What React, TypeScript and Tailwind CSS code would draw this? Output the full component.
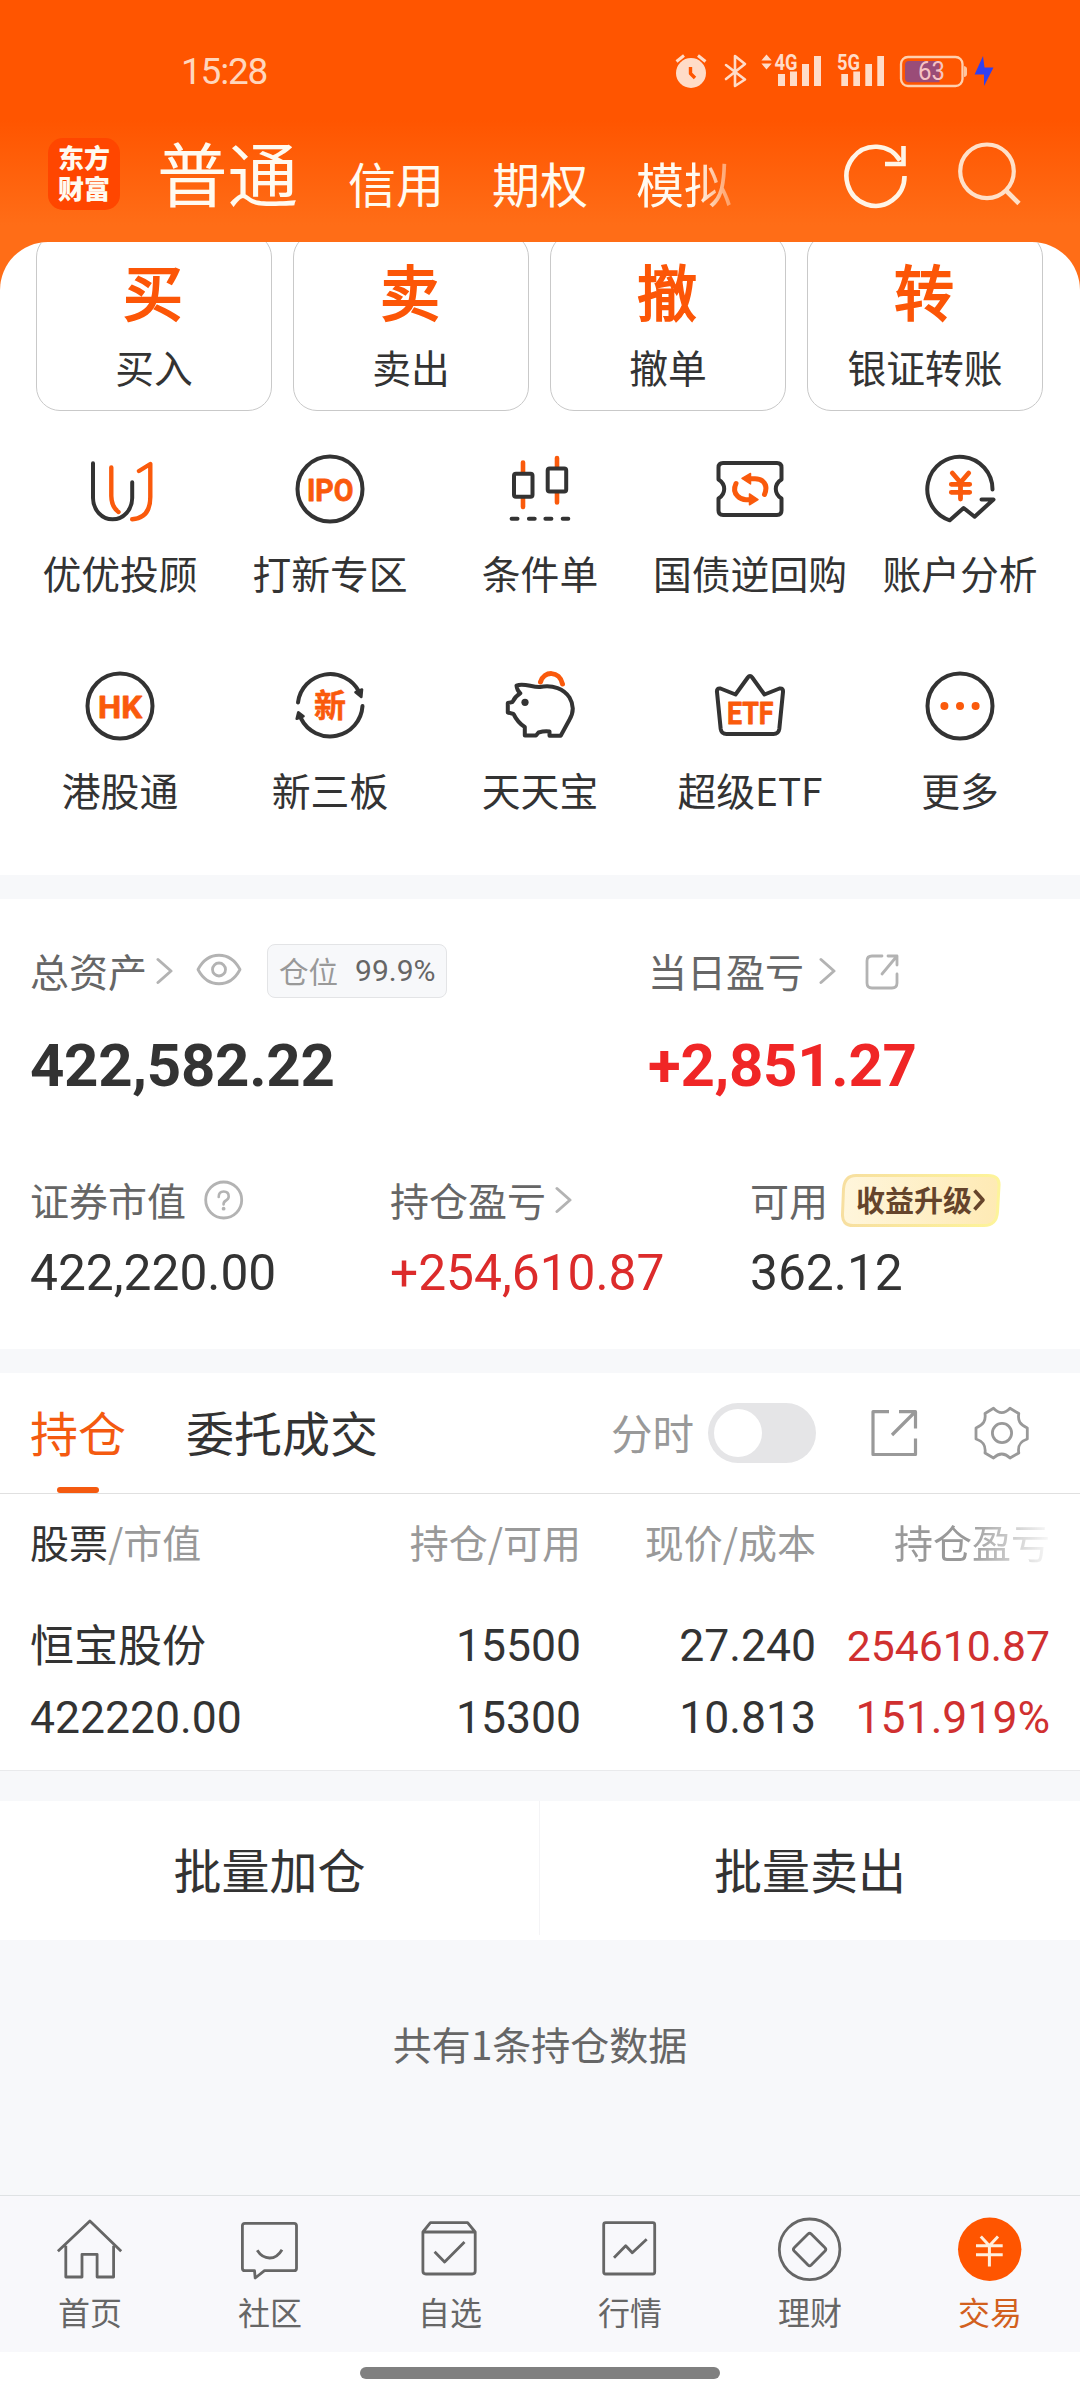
import type { ReactNode } from "react";

const DARK = "#333333";
const ORANGE = "#fa5a0c";

type BoxProps = { x: number; y: number; w: number; h: number; className?: string; children: ReactNode };

/** An icon whose shapes are given in screen coordinates, starting at (x, y). */
function Icon({ x, y, w, h, className = "", children }: BoxProps) {
  return (
    <svg
      width={w}
      height={h}
      viewBox={`${x} ${y} ${w} ${h}`}
      fill="none"
      strokeLinecap="round"
      strokeLinejoin="round"
      className={`block shrink-0 ${className}`}
    >
      {children}
    </svg>
  );
}

function StatusBar() {
  const c = "#ffdcc8";
  return (
    <div className="flex h-[132px] items-center pt-[10px] pl-[181px]">
      <div className="w-[493px] pt-[1px] font-['Roboto'] text-[37px] leading-[40px] tracking-[-1.2px] text-[#ffd6bd]">15:28</div>
      <Icon x={674} y={51} w={34} h={40}>
        <circle cx="691" cy="73" r="15" fill={c} />
        <path d="M676.5 61.5L684 55.500M705.500 61.500L698 55.500" stroke={c} strokeWidth="3" strokeLinecap="butt" />
        <path d="M690.500 67V73.500L695 78" stroke="#ff5500" strokeWidth="3.4" strokeLinecap="butt" />
      </Icon>
      <Icon x={708} y={51} w={52} h={40}>
        <path d="M726 65L745 79.500L735 86V56L745 64L726 79" stroke={c} strokeWidth="2.6" />
      </Icon>
      <Icon x={760} y={51} w={76} h={40}>
        <path d="M766.500 54.500L771.700 60.500H761.400ZM766.500 69.500L771.700 63.500H761.400Z" fill={c} />
        <text x="774.5" y="70" fill={c} fontFamily="Roboto" fontWeight="700" fontSize="21.500" textLength="23" lengthAdjust="spacingAndGlyphs">4G</text>
        <path d="M778 74h7v12h-7zM790 71.500h7v14.500h-7zM802 64h7v22h-7zM814 56h7v30h-7z" fill={c} />
      </Icon>
      <Icon x={836} y={51} w={62} h={40}>
        <text x="837" y="70" fill={c} fontFamily="Roboto" fontWeight="700" fontSize="21.500" textLength="23" lengthAdjust="spacingAndGlyphs">5G</text>
        <path d="M841.300 74h6.700v12h-6.700zM853.300 71.500h6.700v14.500h-6.700zM865.300 64h6.700v22h-6.700zM877.300 56h6.700v30h-6.700z" fill={c} />
      </Icon>
      <Icon x={898} y={51} w={98} h={40}>
        <rect x="901" y="57" width="61.500" height="29" rx="7" stroke="#ffd0ae" strokeWidth="2.3" />
        <path d="M909 61H939.500V82.300H909Q905 82.300 905 78V65Q905 61 909 61Z" fill="#9a4c78" />
        <text x="918" y="80.300" fill="#f6c3c4" fontFamily="Roboto" fontSize="25.500" textLength="27" lengthAdjust="spacingAndGlyphs">63</text>
        <path d="M964 66Q967 66.500 967 69V74Q967 76.500 964 77Z" fill="#ffc49c" />
        <path d="M983 56L974.600 74.500H984V86L993.500 67.500H984.500Z" fill="#3040f0" />
      </Icon>
    </div>
  );
}

function NavBar() {
  return (
    <div className="flex h-[110px] pl-[48px] pr-[57px] font-['Noto_Sans_CJK_SC',sans-serif] text-[#fffaf0]">
      <div className="mt-[6px] h-[72px] w-[72px] rounded-[15px] bg-[#ff4600] px-[10px] pt-[4px] text-[26px] leading-[30.500px] font-black break-all">
        东方财富
      </div>
      <div className="mt-[4px] ml-[37px] w-[191px] text-[70.500px] leading-[70px]">普通</div>
      <div className="mt-[26px] flex gap-[48px] text-[48px] leading-[48px]">
        <span>信用</span>
        <span>期权</span>
        <span className="[mask-image:linear-gradient(to_right,black_60px,transparent_115px)]">模拟</span>
      </div>
      <Icon x={841} y={140} w={70} h={70} className="mt-[8px] ml-auto">
        <path d="M904.500 176A29 29.500 0 1 1 900 160.500" stroke="#fff4e6" strokeWidth="4.600" strokeLinecap="butt" />
        <path d="M903.500 146V164H885" stroke="#fff4e6" strokeWidth="4.600" strokeLinecap="butt" strokeLinejoin="miter" />
      </Icon>
      <Icon x={953} y={140} w={70} h={70} className="mt-[8px] ml-[42px]">
        <circle cx="987" cy="171.300" r="26.800" stroke="#ffe0c8" strokeWidth="4.200" />
        <path d="M1005.500 190L1019 203.500" stroke="#ffe0c8" strokeWidth="4.600" strokeLinecap="butt" />
      </Icon>
    </div>
  );
}

function IconText({ x, y, w, size = 32, children }: { x: number; y: number; w: number; size?: number; children: string }) {
  return (
    <text
      x={x}
      y={y}
      fill={ORANGE}
      stroke={ORANGE}
      strokeWidth="0.8"
      fontFamily="Roboto"
      fontWeight="700"
      fontSize={size}
      textLength={w}
      lengthAdjust="spacingAndGlyphs"
    >
      {children}
    </text>
  );
}

const features: { label: string; x: number; y: number; icon: ReactNode }[] = [
  {
    label: "优优投顾",
    x: 78,
    y: 447,
    icon: (
      <>
        <path d="M93 463.300V498A19.600 21.300 0 0 0 132.200 498V482.300" stroke={DARK} strokeWidth="4" />
        <path d="M111.300 467.500V496Q111.500 507 118.500 512" stroke={ORANGE} strokeWidth="4.400" />
        <path d="M139 471L150.300 464V497Q150.300 518 132.200 519.300" stroke={ORANGE} strokeWidth="4.400" />
      </>
    ),
  },
  {
    label: "打新专区",
    x: 288,
    y: 447,
    icon: (
      <>
        <circle cx="330" cy="489" r="32.500" stroke={DARK} strokeWidth="4" />
        <IconText x={307} y={500.500} w={46.500}>IPO</IconText>
      </>
    ),
  },
  {
    label: "条件单",
    x: 498,
    y: 447,
    icon: (
      <>
        <path d="M523 462.500V507M557 458V502.500" stroke={ORANGE} strokeWidth="4.600" />
        <rect x="514" y="473.800" width="18.500" height="23" rx="2" stroke={DARK} strokeWidth="4" fill="#fff" />
        <rect x="547.700" y="468.500" width="18.500" height="23" rx="2" stroke={DARK} strokeWidth="4" fill="#fff" />
        <path d="M511.600 518.700H517.500M528.900 518.700H534.700M545.400 518.700H551.400M562.700 518.700H568.300" stroke={DARK} strokeWidth="4" />
      </>
    ),
  },
  {
    label: "国债逆回购",
    x: 708,
    y: 447,
    icon: (
      <>
        <path
          d="M723 463H777Q781.500 463 781.500 467.500V479.500Q775.800 483 775.800 489T781.500 498.500V510.500Q781.500 515 777 515H723Q718.500 515 718.500 510.500V498.500Q724.200 495 724.200 489T718.500 479.500V467.500Q718.500 463 723 463Z"
          stroke={DARK}
          strokeWidth="4"
        />
        <path d="M764.500 494.500Q768 486 763 481.500Q760 478.700 755 478.700H748" stroke={ORANGE} strokeWidth="5" />
        <path d="M736 483.500Q732.500 491 737.500 496Q741 499.700 746 499.700H752" stroke={ORANGE} strokeWidth="5" />
        <path d="M742 478.300L750.500 473.500V484ZM758 499.600L749.500 494V504.800Z" fill={ORANGE} stroke={ORANGE} strokeWidth="1.500" />
      </>
    ),
  },
  {
    label: "账户分析",
    x: 918,
    y: 447,
    icon: (
      <>
        <path
          d="M992.500 489.500A32.600 32.600 0 1 0 949.800 520.300L963.600 508L974.600 516.700L993.500 499.500H981.500"
          stroke={DARK}
          strokeWidth="4"
        />
        <path d="M952.300 473L960.500 482.500L968.700 473M960.500 482.500V499M951.300 484.300H969.700M951.300 492.300H969.700" stroke={ORANGE} strokeWidth="4.800" />
      </>
    ),
  },
  {
    label: "港股通",
    x: 78,
    y: 664,
    icon: (
      <>
        <circle cx="120" cy="706" r="32.500" stroke={DARK} strokeWidth="4" />
        <IconText x={98} y={717.500} w={44}>HK</IconText>
      </>
    ),
  },
  {
    label: "新三板",
    x: 288,
    y: 664,
    icon: (
      <>
        <path d="M298 702.500A32.500 32.500 0 0 1 359 691.500M362.500 706A32.500 32.500 0 0 1 301 718.500" stroke={DARK} strokeWidth="4" />
        <path d="M361.300 697L355.500 692.300L362 689.500ZM298.300 712.300L296.700 718.800L303.500 716.300Z" fill={DARK} stroke={DARK} strokeWidth="2.600" />
        <text x="314" y="717" fill={ORANGE} stroke={ORANGE} strokeWidth="0.5" fontFamily="Noto Sans CJK SC" fontWeight="700" fontSize="32">新</text>
      </>
    ),
  },
  {
    label: "天天宝",
    x: 498,
    y: 664,
    icon: (
      <>
        <path d="M540.500 682C544 670.500 559.500 670.500 562.500 684" stroke={ORANGE} strokeWidth="5" />
        <path
          d="M516.500 685.500C524 682.500 532 687.500 540 687C553 684.500 564 689 569.500 697.500C574 705 573.500 713 569.300 720L560.700 735.800H549.500V731.500Q545 730.500 538.500 732.500L536 735.500H524.800V727Q518 723 513.500 714L507.800 712.500V703L512.500 702Q515 696.500 520.300 693.300Q517 690.500 516.500 685.500Z"
          stroke={DARK}
          strokeWidth="4"
        />
        <circle cx="525" cy="702.300" r="3.600" fill={DARK} />
      </>
    ),
  },
  {
    label: "超级ETF",
    x: 708,
    y: 664,
    icon: (
      <>
        <path
          d="M720.500 688.500L735.500 694.500L747.800 677.500Q750 674.500 752.200 677.500L764.500 694.500L779.500 688.500Q783.500 688 783 692L779.300 729Q778.500 734 773.500 734H726.500Q721.500 734 720.700 729L717 692Q716.500 688 720.500 688.500Z"
          stroke={DARK}
          strokeWidth="4"
        />
        <IconText x={727} y={723.500} w={46.500}>ETF</IconText>
      </>
    ),
  },
  {
    label: "更多",
    x: 918,
    y: 664,
    icon: (
      <>
        <circle cx="960" cy="706" r="32.500" stroke={DARK} strokeWidth="4" />
        <path d="M944.400 706h.01M960 706h.01M975.600 706h.01" stroke={ORANGE} strokeWidth="8" />
      </>
    ),
  },
];

const actions = [
  ["买", "买入"],
  ["卖", "卖出"],
  ["撤", "撤单"],
  ["转", "银证转账"],
];

function Shortcuts() {
  return (
    <div className="bg-[#ff6d17]">
      <div className="h-[633px] overflow-hidden rounded-t-[48px] bg-white font-['Noto_Sans_CJK_SC',sans-serif] text-[38.800px] leading-[40px] text-[#333]">
        <div className="-mt-[9px] grid grid-cols-4 gap-[21px] pr-[37px] pl-[36px]">
          {actions.map(([mark, label]) => (
            <div key={label} className="flex h-[178px] flex-col items-center rounded-[24px] border border-[#c9c9c9] pt-[26px]">
              <div className="-ml-[2px] text-[60px] leading-[60px] text-[#fc5607] [-webkit-text-stroke:2px_#fc5607]">{mark}</div>
              <div className="mt-[26px]">{label}</div>
            </div>
          ))}
        </div>
        <div className="grid grid-cols-5 px-[15px] pt-[36px]">
          {features.map((f) => (
            <div key={f.label} className="flex h-[217px] flex-col items-center whitespace-nowrap">
              <Icon x={f.x} y={f.y} w={84} h={84}>{f.icon}</Icon>
              <div className="mt-[21px]">{f.label}</div>
            </div>
          ))}
        </div>
      </div>
    </div>
  );
}

function Chevron({ className = "" }: { className?: string }) {
  return (
    <svg width="18" height="28" viewBox="0 0 18 28" fill="none" className={`block shrink-0 ${className}`}>
      <path d="M2 2.500L15 14L2 25.500" stroke="#b3b3b3" strokeWidth="3" strokeLinecap="round" strokeLinejoin="round" />
    </svg>
  );
}

function Assets() {
  return (
    <div className="h-[450px] bg-white pt-[45px] font-['Noto_Sans_CJK_SC',sans-serif] text-[39px] leading-[50px] text-[#666]">
      <div className="flex pl-[30px]">
        <div className="w-[618px]">
          <div className="flex h-[54px] items-center">
            <span className="-mt-[3px]">总资产</span>
            <Chevron className="ml-[9px]" />
            <Icon x={194} y={950} w={50} h={40} className="ml-[20px] -mt-[3px]">
              <path d="M198 969.500C208 950.500 230 950.500 240 969.500C230 988.500 208 988.500 198 969.500Z" stroke="#b3b3b3" strokeWidth="2.800" />
              <circle cx="219" cy="969.500" r="6.500" stroke="#b3b3b3" strokeWidth="2.800" />
            </Icon>
            <div className="ml-[23px] flex h-[54px] w-[180px] items-center rounded-[8px] border border-[#e3e4e6] bg-[#f7f8fa] pl-[11px]">
              <span className="-mt-[3px] text-[29.500px] text-[#999]">仓位</span>
              <span className="ml-[17px] font-['Roboto'] text-[30px]">99.9%</span>
            </div>
          </div>
          <div className="mt-[38px] font-['Roboto'] text-[60px] leading-[60px] font-bold tracking-[-0.3px] text-[#333]">422,582.22</div>
        </div>
        <div>
          <div className="flex h-[54px] items-center">
            <span className="-mt-[3px]">当日盈亏</span>
            <Chevron className="ml-[15px]" />
            <Icon x={862} y={950} w={40} h={40} className="ml-[25px]">
              <path d="M882 955H872Q867 955 867 960V982Q867 987 872 987H892Q897 987 897 982V973M888 955H897V964M897 955L882 973" stroke="#b3b3b3" strokeWidth="2.800" />
            </Icon>
          </div>
          <div className="mt-[38px] font-['Roboto'] text-[60px] leading-[60px] font-bold tracking-[-0.3px] text-[#f02626]">+2,851.27</div>
        </div>
      </div>
      <div className="mt-[78px] flex pl-[30px]">
        <div className="w-[360px]">
          <div className="flex h-[52px] items-center">
            <span className="-mt-[2px]">证券市值</span>
            <Icon x={202} y={1178} w={44} h={44} className="ml-[16px]">
              <circle cx="223.700" cy="1200" r="18" stroke="#b3b3b3" strokeWidth="2.800" />
              <path d="M218.700 1197Q218.700 1191.500 223.700 1191.500T228.700 1196.500Q228.700 1199 226 1200.500T223.600 1204.500" stroke="#b3b3b3" strokeWidth="2.600" />
              <circle cx="223.600" cy="1208.700" r="1.900" fill="#b3b3b3" />
            </Icon>
          </div>
          <div className="mt-[22px] font-['Roboto'] text-[49.700px] text-[#333]">422,220.00</div>
        </div>
        <div className="w-[360px]">
          <div className="flex h-[52px] items-center">
            <span className="-mt-[2px]">持仓盈亏</span>
            <Chevron className="ml-[9px]" />
          </div>
          <div className="mt-[22px] font-['Roboto'] text-[49.700px] text-[#dc2b2b]">+254,610.87</div>
        </div>
        <div>
          <div className="flex h-[52px] items-center">
            <span className="-mt-[2px]">可用</span>
            <div className="relative ml-[13px] flex h-[53px] w-[160px] items-center pl-[15px]">
              <svg width="160" height="53" viewBox="0 0 160 53" className="absolute inset-0">
                <defs>
                  <linearGradient id="tagFill" x1="0" x2="1"><stop stopColor="#fff6dc" /><stop offset="1" stopColor="#feeab4" /></linearGradient>
                  <linearGradient id="tagEdge" x1="0" x2="1"><stop stopColor="#f7dfa0" /><stop offset="1" stopColor="#fdf49a" /></linearGradient>
                </defs>
                <path d="M15 1.500H147Q159 1.500 158 12L156.500 38Q155.500 51.500 143 51.500H12Q1 51.500 1.500 40L2.500 15Q3.500 1.500 15 1.500Z" fill="url(#tagFill)" stroke="url(#tagEdge)" strokeWidth="3" />
              </svg>
              <span className="relative -mt-[3px] text-[29px] leading-[40px] font-bold text-[#65442b]">收益升级</span>
              <svg width="14" height="24" viewBox="0 0 14 24" fill="none" className="relative">
                <path d="M2.500 2.500L11 12L2.500 21.500" stroke="#65442b" strokeWidth="3.600" strokeLinejoin="round" />
              </svg>
            </div>
          </div>
          <div className="mt-[22px] font-['Roboto'] text-[49.700px] text-[#333]">362.12</div>
        </div>
      </div>
    </div>
  );
}

function Holdings() {
  return (
    <div className="h-[398px] border-b border-[#e9eaec] bg-white font-['Noto_Sans_CJK_SC',sans-serif]">
      <div className="flex h-[121px] items-center border-b border-[#e0e0e0] pl-[30px] text-[48px] leading-[60px]">
        <div className="relative flex h-[120px] items-center pb-[4px] text-[#f45a10]">
          持仓
          <div className="absolute bottom-0 left-[27px] h-[6px] w-[42px] rounded-[3px] bg-[#f45a10]" />
        </div>
        <div className="ml-[60px] pb-[4px] text-[#333]">委托成交</div>
        <div className="ml-[233px] pb-[3px] text-[41.500px] text-[#999]">分时</div>
        <div className="ml-[14px] h-[60px] w-[108px] rounded-full bg-[#e5e5e7] p-[6px]">
          <div className="h-[48px] w-[48px] rounded-full bg-white" />
        </div>
        <Icon x={868} y={1407} w={52} h={52} className="ml-[52px]">
          <path d="M889 1411.700H873V1454.500H915.500V1438.500M899 1411.700H915.500V1428.500M915 1412L892 1435" stroke="#999" strokeWidth="3.200" strokeLinecap="butt" />
        </Icon>
        <Icon x={972} y={1403} w={60} h={60} className="ml-[52px]">
          <path
            d="M993.500 1408.300Q1001.800 1417 1010 1408.300L1018.800 1413.500C1017.500 1421 1020 1424.500 1027.300 1428V1439C1020 1441.500 1017.500 1445.500 1018.800 1453L1010 1458Q1001.800 1450 993.500 1458L985 1453C986 1445.500 983.500 1441.500 976 1439V1428C983.500 1424.500 986 1421 985 1413.500Z"
            stroke="#999"
            strokeWidth="2.800"
          />
          <circle cx="1002" cy="1433" r="9.600" stroke="#999" strokeWidth="2.800" />
        </Icon>
      </div>
      <div className="grid grid-cols-[252px_299px_235px_234px] pl-[30px] text-right text-[44.500px] leading-[72px] text-[#333]">
        <div className="h-[116px] pt-[27px] text-left text-[39px] leading-[40px]">股票<span className="text-[#999]">/市值</span></div>
        <div className="pt-[27px] text-[39px] leading-[40px] text-[#999]">持仓/可用</div>
        <div className="pt-[27px] text-[39px] leading-[40px] text-[#999]">现价/成本</div>
        <div className="pt-[27px] text-[39px] leading-[40px] text-[#999] [mask-image:linear-gradient(to_right,black_150px,rgba(0,0,0,0.06)_234px)]">持仓盈亏</div>
        <div className="-mt-[3px] h-[75px] text-left text-[44px]">恒宝股份</div>
        <div className="font-['Roboto']">15500</div>
        <div className="font-['Roboto']">27.240</div>
        <div className="font-['Roboto'] text-[42.700px] text-[#d03030]">254610.87</div>
        <div className="text-left font-['Roboto']">422220.00</div>
        <div className="font-['Roboto']">15300</div>
        <div className="font-['Roboto']">10.813</div>
        <div className="font-['Roboto'] text-[#d03030]">151.919%</div>
      </div>
    </div>
  );
}

const tabs: { label: string; active?: boolean; icon: ReactNode }[] = [
  {
    label: "首页",
    icon: <path d="M3.900 38.300L35.900 8L67.200 38.300M11.800 32.700V64H28V41.300H43.100V64H59.600V32.700" />,
  },
  {
    label: "社区",
    icon: <path d="M11 10.300H60Q62.500 10.300 62.500 12.800V55.200Q62.500 57.700 60 57.700H30.500L21.200 65L20.500 57.700H11Q8.400 57.700 8.400 55.200V12.800Q8.400 10.300 11 10.300ZM23.200 37.300Q28 45 35.600 45T48 36.700" />,
  },
  {
    label: "自选",
    icon: <path d="M8.900 19L16.400 9.700H53.600L61.200 19V58Q61.200 61 58.200 61H11.900Q8.900 61 8.900 58ZM8.900 19H61.200M20.600 38.700L30.600 49L50.500 29" />,
  },
  {
    label: "行情",
    icon: <path d="M11.700 9.700H58.700Q60.700 9.700 60.700 11.700V59Q60.700 61 58.700 61H11.700Q9.700 61 9.700 59V11.700Q9.700 9.700 11.700 9.700ZM20 44.700L31.700 32.700L38.300 39.700L52.700 26.300" />,
  },
  {
    label: "理财",
    icon: (
      <>
        <circle cx="35.600" cy="36.300" r="30.300" />
        <path d="M34 21Q35.600 19.500 37.200 21L51 34.700Q52.600 36.300 51 38L37.200 52Q35.600 53.500 34 52L20.200 38Q18.600 36.300 20.200 34.700Z" />
      </>
    ),
  },
  {
    label: "交易",
    active: true,
    icon: (
      <>
        <circle cx="35.700" cy="36.300" r="31.700" fill="#ff5500" stroke="none" />
        <path d="M26.800 23.500L35.400 32.700L44 23.500M35.400 32.700V53.500M22 32.700H48.700M22 41.700H48.700" stroke="#ffeedd" strokeWidth="3" strokeLinecap="butt" />
      </>
    ),
  },
];

function TabBar() {
  return (
    <div className="grid h-[157px] grid-cols-6 border-t border-[#dfe2e4] bg-[#f8f8fb] font-['Noto_Sans_CJK_SC',sans-serif] text-[32px] leading-[32px] text-[#666]">
      {tabs.map((t) => (
        <div key={t.label} className="flex flex-col items-center pt-[17px]">
          <svg width="72" height="72" viewBox="0 0 72 72" fill="none" stroke="#666" strokeWidth="2.800" strokeLinejoin="round" className="block">
            {t.icon}
          </svg>
          <div className={t.active ? "mt-[10px] text-[#d2601e]" : "mt-[10px]"}>{t.label}</div>
        </div>
      ))}
    </div>
  );
}

export default function App() {
  return (
    <div className="flex h-[2400px] w-[1080px] flex-col overflow-hidden bg-[#f7f8fa]">
      <div className="h-[242px] bg-[linear-gradient(to_bottom,#ff5500_0px,#ff5500_120px,#ff6d17_225px)]">
        <StatusBar />
        <NavBar />
      </div>
      <Shortcuts />
      <div className="h-[24px]" />
      <Assets />
      <div className="h-[24px]" />
      <Holdings />
      <div className="mt-[30px] grid h-[139px] grid-cols-2 bg-white pb-[5px] text-center font-['Noto_Sans_CJK_SC',sans-serif] text-[48px] leading-[134px] text-[#333]">
        <div className="border-r border-[#f4f4f6]">批量加仓</div>
        <div>批量卖出</div>
      </div>
      <div className="mt-[81px] text-center font-['Noto_Sans_CJK_SC',sans-serif] text-[39px] leading-[44px] text-[#666]">共有1条持仓数据</div>
      <div className="mt-auto">
        <TabBar />
        <div className="flex h-[48px] justify-center bg-white pt-[15px]">
          <div className="h-[12px] w-[360px] rounded-full bg-[#808080]" />
        </div>
      </div>
    </div>
  );
}
